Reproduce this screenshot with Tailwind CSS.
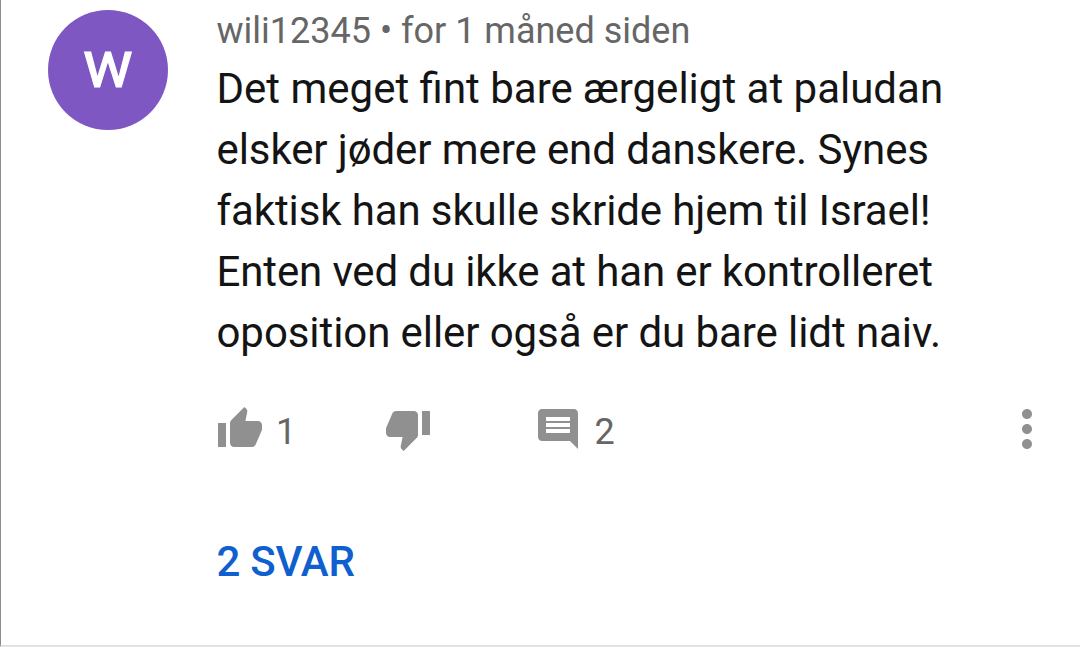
<!DOCTYPE html>
<html lang="da">
    <head>
        <meta charset="utf-8">
        <title>Kommentar</title>
        <script src="https://cdn.jsdelivr.net/npm/@tailwindcss/browser@4"></script>
    </head>
    <body class="bg-white overflow-hidden">
        <div class="flex w-[1080px] h-[647px] pl-[47px] border-l border-l-[#8c8c8c] border-b-2 border-b-[#e2e2e2] font-[Roboto,sans-serif]">
            <div class="flex items-center justify-center shrink-0 w-[120px] h-[120px] mt-[10px] mr-[48.5px] pb-[10px] rounded-full bg-[#7e57c2] text-white text-[66px] leading-none [-webkit-text-stroke:1.2px_white]">w</div>
            <div class="grow">
                <div class="mt-[10px] text-[36px] leading-[42px] text-[#666666] whitespace-nowrap">wili12345 • for 1 måned siden</div>
                <p class="mt-[6px] text-[42px] leading-[61px] text-[#141414] whitespace-nowrap">
                    Det meget fint bare ærgeligt at paludan<br>
                    <span class="tracking-[-0.09px]">elsker jøder mere end danskere. Synes</span><br>
                    <span class="tracking-[-0.11px]">faktisk han skulle skride hjem til Israel!</span><br>
                    <span class="tracking-[-0.13px]">Enten ved du ikke at han er kontrolleret</span><br>
                    <span class="tracking-[-0.08px]">oposition eller også er du bare lidt naiv.</span>
                </p>
                <div class="flex items-center h-[48px] mt-[42px] -ml-[0.5px] text-[36px] text-[#666666]">
                    <svg class="w-[48px] h-[48px]" fill="#909090" viewBox="0 0 24 24"><path d="M1 21h4V9H1v12zm22-11c0-1.100-.9-2-2-2h-6.310l.95-4.570.03-.32c0-.41-.17-.79-.44-1.060L14.170 1 7.590 7.590C7.220 7.950 7 8.450 7 9v10c0 1.100.9 2 2 2h9c.83 0 1.540-.5 1.840-1.220l3.020-7.050c.09-.23.14-.47.14-.73v-2z"/></svg>
                    <span class="w-[120px] pt-[5px] pl-[12px]">1</span>
                    <svg class="w-[48px] h-[48px]" fill="#909090" viewBox="0 0 24 24"><path d="M15 3H6c-.83 0-1.540.5-1.840 1.220l-3.020 7.050c-.09.23-.14.47-.14.73v2c0 1.100.9 2 2 2h6.310l-.95 4.570-.03.320c0 .41.17.79.44 1.060L9.830 23l6.590-6.590c.36-.36.58-.86.58-1.410V5c0-1.100-.9-2-2-2zm4 0v12h4V3h-4z"/></svg>
                    <svg class="w-[48px] h-[48px] ml-[102px]" fill="#909090" viewBox="0 0 24 24"><path d="M21.990 4c0-1.100-.89-2-1.990-2H4c-1.100 0-2 .9-2 2v12c0 1.100.9 2 2 2h14l4 4-.01-18zM18 14H6v-2h12v2zm0-3H6V9h12v2zm0-3H6V6h12v2z"/></svg>
                    <span class="pt-[5px] pl-[12.5px]">2</span>
                    <svg class="w-[60px] h-[60px] ml-auto mr-[23px]" fill="#909090" viewBox="0 0 24 24"><path d="M12 8c1.100 0 2-.9 2-2s-.9-2-2-2-2 .9-2 2 .9 2 2 2zm0 2c-1.100 0-2 .9-2 2s.9 2 2 2 2-.9 2-2-.9-2-2-2zm0 6c-1.100 0-2 .9-2 2s.9 2 2 2 2-.9 2-2-.9-2-2-2z"/></svg>
                </div>
                <div class="mt-[85px] text-[42px] leading-[48px] tracking-[-0.25px] font-medium text-[#0f5fcf]">2 SVAR</div>
            </div>
        </div>
    </body>
</html>
